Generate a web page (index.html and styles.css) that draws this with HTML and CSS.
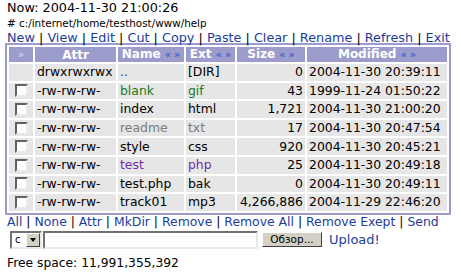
FILE: index.html
```html
<html>
<head>
    <meta charset="utf-8">
    <link rel="stylesheet" href="styles.css">
</head>
<body>
<div class="page">
    <div class="now">Now: 2004-11-30 21:00:26</div>
    <div class="path"># c:/internet/home/testhost/www/help</div>
    <div class="menu menu-top">
        <a href="#">New</a> | <a href="#">View</a> | <a href="#">Edit</a> | <a href="#">Cut</a> | <a href="#">Copy</a> | <a href="#">Paste</a> | <a href="#">Clear</a> | <a href="#">Rename</a> | <a href="#">Refresh</a> | <a href="#">Exit</a>
    </div>
    <table class="files">
        <tr class="head">
            <th class="col-check light">&raquo;</th>
            <th class="col-attr">Attr</th>
            <th class="col-name">Name <span class="sort">&laquo; &raquo;</span></th>
            <th class="col-ext">Ext <span class="sort">&laquo; &raquo;</span></th>
            <th class="col-size">Size <span class="sort">&laquo; &raquo;</span></th>
            <th class="col-mod">Modified <span class="sort">&laquo; &raquo;</span></th>
        </tr>
        <tr>
            <td></td>
            <td>drwxrwxrwx</td>
            <td class="dir">..</td>
            <td>[DIR]</td>
            <td class="size">0</td>
            <td>2004-11-30 20:39:11</td>
        </tr>
        <tr class="green">
            <td><span class="check"></span></td>
            <td class="black">-rw-rw-rw-</td>
            <td>blank</td>
            <td>gif</td>
            <td class="size black">43</td>
            <td class="black">1999-11-24 01:50:22</td>
        </tr>
        <tr>
            <td><span class="check"></span></td>
            <td>-rw-rw-rw-</td>
            <td>index</td>
            <td>html</td>
            <td class="size">1,721</td>
            <td>2004-11-30 21:00:20</td>
        </tr>
        <tr class="grey">
            <td><span class="check"></span></td>
            <td class="black">-rw-rw-rw-</td>
            <td>readme</td>
            <td>txt</td>
            <td class="size black">17</td>
            <td class="black">2004-11-30 20:47:54</td>
        </tr>
        <tr>
            <td><span class="check"></span></td>
            <td>-rw-rw-rw-</td>
            <td>style</td>
            <td>css</td>
            <td class="size">920</td>
            <td>2004-11-30 20:45:21</td>
        </tr>
        <tr class="purple">
            <td><span class="check"></span></td>
            <td class="black">-rw-rw-rw-</td>
            <td>test</td>
            <td>php</td>
            <td class="size black">25</td>
            <td class="black">2004-11-30 20:49:18</td>
        </tr>
        <tr>
            <td><span class="check"></span></td>
            <td>-rw-rw-rw-</td>
            <td>test.php</td>
            <td>bak</td>
            <td class="size">0</td>
            <td>2004-11-30 20:49:11</td>
        </tr>
        <tr>
            <td><span class="check"></span></td>
            <td>-rw-rw-rw-</td>
            <td>track01</td>
            <td>mp3</td>
            <td class="size">4,266,886</td>
            <td>2004-11-29 22:46:20</td>
        </tr>
    </table>
    <div class="menu menu-bottom">
        <a href="#">All</a> | <a href="#">None</a> | <a href="#">Attr</a> | <a href="#">MkDir</a> | <a href="#">Remove</a> | <a href="#">Remove All</a> | <a href="#">Remove Exept</a> | <a href="#">Send</a>
    </div>
    <div class="upload">
        <span class="drive"><span class="drive-text">c</span><span class="drive-btn"></span></span>
        <span class="file-field"></span>
        <span class="browse">Обзор...</span>
        <a class="upload-link" href="#">Upload!</a>
    </div>
    <div class="free">Free space: 11,991,355,392</div>
</div>
</body>
</html>
```

FILE: styles.css
```css
body{
    margin: 0;
    background: #fff;
    color: #000;
    font-family: "DejaVu Sans", Verdana, sans-serif;
}
.page{
    padding: 0 0 0 5px;
}
.now{
    padding-left: 2px;
    font-size: 12.8px;
    line-height: 15px;
}
.path{
    padding-left: 2px;
    margin-top: 1px;
    font-size: 10.4px;
    line-height: 15px;
}
.menu{
    padding-left: 2px;
    font-size: 12.4px;
    line-height: 14px;
}
.menu-top{
    font-size: 12.8px;
    margin-bottom: -2px;
}
.menu-bottom{
    margin-top: 0;
}
.menu a, .upload-link{
    color: #1c3c9c;
    text-decoration: none;
}

.files{
    border: 2px solid #9c9ccc;
    border-spacing: 2px;
    background: #fff;
    font-size: 12.4px;
    line-height: 14px;
}
.files td{
    background: #e6e6e6;
    height: 16.6px;
    padding: 0 2px;
    white-space: nowrap;
}
.files th{
    background: #9c9ccc;
    color: #fff;
    height: 14px;
    padding: 0 2px;
    font-size: 12px;
    white-space: nowrap;
}
.files th.light{
    color: #dde;
    font-weight: normal;
    font-size: 10px;
}
.sort{
    color: #2a4cc4;
    font-weight: normal;
    font-size: 10px;
}
.col-check{ width: 20px; }
.col-attr{ width: 77px; }
.col-name{ width: 62px; }
.col-ext{ width: 45px; }
.col-size{ width: 64px; }
.col-mod{ width: 136px; }
.files td:first-child{
    text-align: center;
}
.size{
    text-align: right;
}
.dir{ color: #1c3c9c; }
.green td{ color: #157a15; }
.grey td{ color: #7a7a7a; }
.purple td{ color: #7030a8; }
.files td.black{ color: #000; }

.check{
    display: inline-block;
    width: 9px;
    height: 9px;
    vertical-align: middle;
    background: #fff;
    border: 2px solid;
    border-color: #606060 #e8e8e8 #e8e8e8 #606060;
}

.upload{
    display: flex;
    align-items: center;
    margin-top: 2px;
    padding-left: 5px;
    height: 18px;
}
.drive{
    display: flex;
    align-items: center;
    height: 14px;
    width: 28px;
    border: 2px solid;
    border-color: #707070 #e8e8e8 #e8e8e8 #707070;
    background: #fff;
    font-size: 10px;
}
.drive-text{
    flex: 1;
    padding-left: 3px;
}
.drive-btn{
    position: relative;
    width: 12px;
    height: 12px;
    background: #d4d0c8;
    border: 1px solid;
    border-color: #fff #404040 #404040 #fff;
}
.drive-btn:after{
    content: '';
    position: absolute;
    left: 3px;
    top: 4px;
    border-left: 3px solid transparent;
    border-right: 3px solid transparent;
    border-top: 4px solid #000;
}
.file-field{
    margin-left: 1px;
    width: 211px;
    height: 14px;
    border: 2px solid;
    border-color: #707070 #e8e8e8 #e8e8e8 #707070;
    background: #fff;
}
.browse{
    margin-left: 4px;
    width: 58px;
    height: 13px;
    line-height: 13px;
    text-align: center;
    background: #d4d0c8;
    border: 1px solid;
    border-color: #fff #404040 #404040 #fff;
    font-size: 10.5px;
}
.upload-link{
    margin-left: 7px;
    font-size: 13px;
}
.free{
    margin-top: 7px;
    padding-left: 2px;
    font-size: 12.3px;
    line-height: 15px;
}
```
